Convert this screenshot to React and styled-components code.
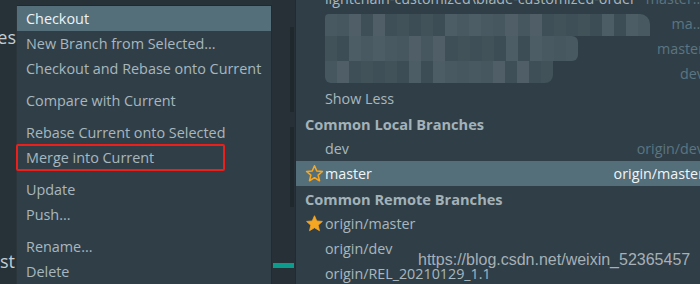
import React from "react";
import styled, { createGlobalStyle } from "styled-components";

const GlobalStyle = createGlobalStyle`
  html, body {
    margin: 0;
    padding: 0;
    background: #263238;
    overflow: hidden;
  }
  body {
    font-family: "Open Sans", "Noto Sans", sans-serif;
    -webkit-font-smoothing: antialiased;
  }
`;

const Page = styled.div`
  position: relative;
  display: flex;
  width: 700px;
  height: 284px;
  overflow: hidden;
  background: #263238;
`;

const LeftEdge = styled.div`
  width: 16px;
  flex: none;
  display: flex;
  flex-direction: column;
  align-items: flex-end;
  overflow: hidden;
  padding-top: 25px;
  box-sizing: border-box;
`;

const EdgeText = styled.div`
  white-space: nowrap;
  font-size: 18px;
  line-height: 24px;
  color: #c3ced4;
  margin-top: ${({ $gap }) => $gap || 0}px;
  margin-right: ${({ $shift }) => $shift || 0}px;
`;

const Menu = styled.div`
  width: 256px;
  flex: none;
  margin-top: 5px;
  background: #303f47;
  border-top: 1px solid #20292e;
  border-left: 1px solid #2a363c;
  border-right: 1px solid #222b30;
  box-sizing: border-box;
  display: flex;
  flex-direction: column;
`;

const Group = styled.div`
  display: flex;
  flex-direction: column;
  & + & {
    margin-top: 7px;
  }
`;

const MenuItem = styled.div`
  position: relative;
  height: 25px;
  display: flex;
  align-items: center;
  padding-left: 9px;
  font-size: 14.4px;
  white-space: nowrap;
  color: ${({ $active }) => ($active ? "#eef3f5" : "#a8b7bf")};
  background: ${({ $active }) => ($active ? "#546e7a" : "transparent")};

  ${({ $marked }) =>
    $marked &&
    `
    &::after {
      content: "";
      position: absolute;
      left: -1px;
      top: -1px;
      width: 209px;
      height: 27px;
      border: 2px solid #ec1f1a;
      border-radius: 2px;
      box-sizing: border-box;
    }
  `}
`;

const Gutter = styled.div`
  width: 23px;
  flex: none;
  background: #263036;
  display: flex;
  flex-direction: column;
  align-items: flex-end;
  padding-top: 27px;
  box-sizing: border-box;
`;

const Track = styled.div`
  width: 4px;
  height: ${({ $h }) => $h}px;
  margin-bottom: ${({ $gap }) => $gap || 0}px;
  margin-right: 1px;
  background: #1f282c;
`;

const TealBar = styled.div`
  width: 21px;
  height: 5px;
  margin-top: 56px;
  margin-right: 1px;
  background: #0b9c8e;
`;

const Panel = styled.div`
  flex: 1;
  margin-right: -4px;
  background: #303f47;
  border-left: 1px solid #222b30;
  overflow: hidden;
`;

const List = styled.div`
  margin-top: -14px;
  display: flex;
  flex-direction: column;
`;

const Row = styled.div`
  height: 25px;
  display: flex;
  align-items: center;
  padding-left: 9px;
  font-size: 14.3px;
  white-space: nowrap;
  background: ${({ $active }) => ($active ? "#546e7a" : "transparent")};
`;

const IconSlot = styled.span`
  width: 20px;
  flex: none;
  display: flex;
  align-items: center;
`;

const Name = styled.span`
  flex: 1;
  overflow: hidden;
  color: ${({ $active }) => ($active ? "#f1f5f7" : "#a8b7bf")};
`;

const Header = styled.span`
  font-size: 14.6px;
  font-weight: 700;
  color: #a3b2b9;
`;

const Track2 = styled.span`
  flex: none;
  color: ${({ $active }) => ($active ? "#f1f5f7" : "#5b7582")};
`;

const MosaicBar = styled.div`
  display: flex;
  align-self: stretch;
  width: ${({ $w }) => $w}px;
  margin-top: ${({ $top }) => $top || 0}px;
  margin-bottom: ${({ $bottom }) => $bottom || 0}px;
  border-radius: ${({ $radius }) => $radius};
  overflow: hidden;
  flex: none;
  filter: blur(0.6px);
`;

const Cell = styled.div`
  flex: 1;
  background: ${({ $shade }) => $shade};
`;

const Spacer = styled.div`
  flex: 1;
`;

const Watermark = styled.div`
  position: absolute;
  left: 418px;
  top: 251px;
  font-family: "Liberation Sans", Arial, sans-serif;
  font-size: 16px;
  color: rgba(215, 222, 226, 0.72);
  white-space: nowrap;
  pointer-events: none;
`;

function Star({ filled }) {
  return (
    <svg width="19" height="19" viewBox="0 0 24 24">
      <path
        d="M12 2.2l2.9 6.6 7.1.6-5.4 4.7 1.7 7-6.3-3.8-6.3 3.8 1.7-7L2 9.4l7.1-.6z"
        fill={filled ? "#f5a623" : "none"}
        stroke="#f5a623"
        strokeWidth={filled ? 1 : 2}
        strokeLinejoin="round"
      />
    </svg>
  );
}

const shades = ["#3f4f58", "#46575f", "#4c5d66", "#425259", "#505f67", "#485961", "#3d4d55"];

function Mosaic({ w, top, bottom, radius, seed }) {
  const n = Math.round(w / 12);
  return (
    <MosaicBar $w={w} $top={top} $bottom={bottom} $radius={radius}>
      {Array.from({ length: n }).map((_, i) => (
        <Cell key={i} $shade={shades[(i * 3 + seed * 5 + (i >> 2)) % shades.length]} />
      ))}
    </MosaicBar>
  );
}

const menuGroups = [
  ["Checkout", "New Branch from Selected...", "Checkout and Rebase onto Current"],
  ["Compare with Current"],
  ["Rebase Current onto Selected", "Merge into Current"],
  ["Update", "Push..."],
  ["Rename...", "Delete"],
];

export default function App() {
  return (
    <>
      <GlobalStyle />
      <Page>
        <LeftEdge>
          <EdgeText>Changes</EdgeText>
          <EdgeText $gap={200} $shift={1}>Adjust</EdgeText>
        </LeftEdge>

        <Menu>
          {menuGroups.map((group, gi) => (
            <Group key={gi}>
              {group.map((label) => (
                <MenuItem
                  key={label}
                  $active={label === "Checkout"}
                  $marked={label === "Merge into Current"}
                >
                  {label}
                </MenuItem>
              ))}
            </Group>
          ))}
        </Menu>

        <Gutter>
          <Track $h={85} $gap={15} />
          <Track $h={80} />
          <TealBar />
        </Gutter>

        <Panel>
          <List>
            <Row>
              <IconSlot />
              <Name>lightchain-customized\blade-customized-order</Name>
              <Track2>master...</Track2>
            </Row>
            <Row>
              <IconSlot />
              <Mosaic w={325} top={3} radius="4px 10px 0 0" seed={1} />
              <Spacer />
              <Track2>ma...</Track2>
            </Row>
            <Row>
              <IconSlot />
              <Mosaic w={253} radius="0 6px 6px 0" seed={2} />
              <Spacer />
              <Track2>master</Track2>
            </Row>
            <Row>
              <IconSlot />
              <Mosaic w={228} bottom={3} radius="0 0 8px 6px" seed={3} />
              <Spacer />
              <Track2>dev</Track2>
            </Row>
            <Row>
              <IconSlot />
              <Name>Show Less</Name>
            </Row>
            <Row>
              <Header>Common Local Branches</Header>
            </Row>
            <Row>
              <IconSlot />
              <Name>dev</Name>
              <Track2>origin/dev</Track2>
            </Row>
            <Row $active>
              <IconSlot>
                <Star />
              </IconSlot>
              <Name $active>master</Name>
              <Track2 $active>origin/master</Track2>
            </Row>
            <Row>
              <Header>Common Remote Branches</Header>
            </Row>
            <Row>
              <IconSlot>
                <Star filled />
              </IconSlot>
              <Name>origin/master</Name>
            </Row>
            <Row>
              <IconSlot />
              <Name>origin/dev</Name>
            </Row>
            <Row>
              <IconSlot />
              <Name>origin/REL_20210129_1.1</Name>
            </Row>
          </List>
        </Panel>

        <Watermark>https://blog.csdn.net/weixin_52365457</Watermark>
      </Page>
    </>
  );
}
